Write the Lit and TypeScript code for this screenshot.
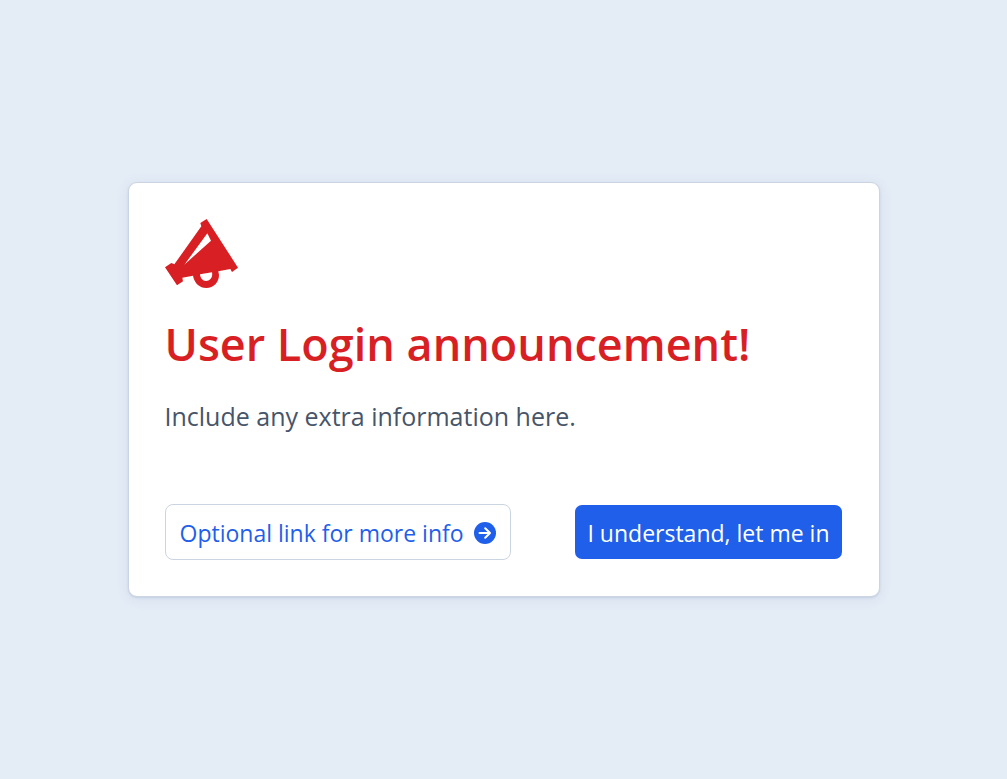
import { LitElement, html, css } from "lit";
import { customElement } from "lit/decorators.js";

@customElement("app-root")
export class AppRoot extends LitElement {
  static styles = css`
    :host {
      display: flex;
      align-items: center;
      justify-content: center;
      box-sizing: border-box;
      min-height: 100vh;
      padding: 24px;
      background: #e4ecf6;
      font-family: "Segoe UI", "Open Sans", sans-serif;
    }
    .card {
      box-sizing: border-box;
      width: 100%;
      max-width: 752px;
      padding: 36px;
      background: #fff;
      border: 1px solid #cbd5e1;
      border-radius: 9px;
      box-shadow: 0 1px 2px rgba(148, 163, 200, 0.3), 0 2px 12px rgba(148, 163, 200, 0.2);
    }
    .icon {
      display: block;
      width: 73px;
      height: 69px;
      fill: #d81f23;
    }
    .title {
      margin: 26px 0 0;
      color: #d81f23;
      font-size: 45px;
      font-weight: 600;
      line-height: 60px;
    }
    .text {
      margin: 22px 0 0;
      color: #475569;
      font-size: 25px;
      line-height: 40px;
    }
    .actions {
      display: flex;
      flex-wrap: wrap;
      align-items: center;
      justify-content: space-between;
      gap: 16px;
      margin-top: 68px;
    }
    .button {
      display: inline-flex;
      align-items: center;
      gap: 10px;
      box-sizing: border-box;
      min-height: 56px;
      margin: 0;
      padding: 10px 14px 8px;
      border: 1px solid #cbd5e1;
      border-radius: 8px;
      background: #fff;
      color: #1f5fea;
      font: inherit;
      font-size: 23px;
      line-height: 32px;
      text-decoration: none;
      cursor: pointer;
    }
    .primary {
      padding: 10px 12px 8px;
      border-color: transparent;
      background: #1f5fea;
      background-clip: padding-box;
      color: #fff;
    }
    .arrow {
      width: 22px;
      height: 22px;
    }
  `;

  render() {
    return html`
      <main class="card">
        <svg class="icon" viewBox="30 27 219 207" aria-hidden="true">
          <path
            fill-rule="evenodd"
            d="M155 27 L136 39 L139 49 L58 163 L49 159 L30 172 L66 226 L84 214 L82 203 L114 197 C118 219 134 234 154 234 C176 234 192 217 192 195 L190 184 L226 177 L231 186 L249 173 Z M157 70 L168 92 L88 164 Z M135 193 L171 187 C174 202 166 213 153 213 C143 213 136 205 135 193 Z"
          />
        </svg>
        <h1 class="title">User Login announcement!</h1>
        <p class="text">Include any extra information here.</p>
        <div class="actions">
          <a class="button" href="#more-info">
            Optional link for more info
            <svg class="arrow" viewBox="0 0 22 22" aria-hidden="true">
              <circle cx="11" cy="11" r="11" fill="#1f5fea" />
              <path
                d="M5.5 11h10M11.2 6.2l4.8 4.8-4.8 4.8"
                fill="none"
                stroke="#fff"
                stroke-width="2"
                stroke-linecap="round"
                stroke-linejoin="round"
              />
            </svg>
          </a>
          <button class="button primary" type="button">I understand, let me in</button>
        </div>
      </main>
    `;
  }
}
